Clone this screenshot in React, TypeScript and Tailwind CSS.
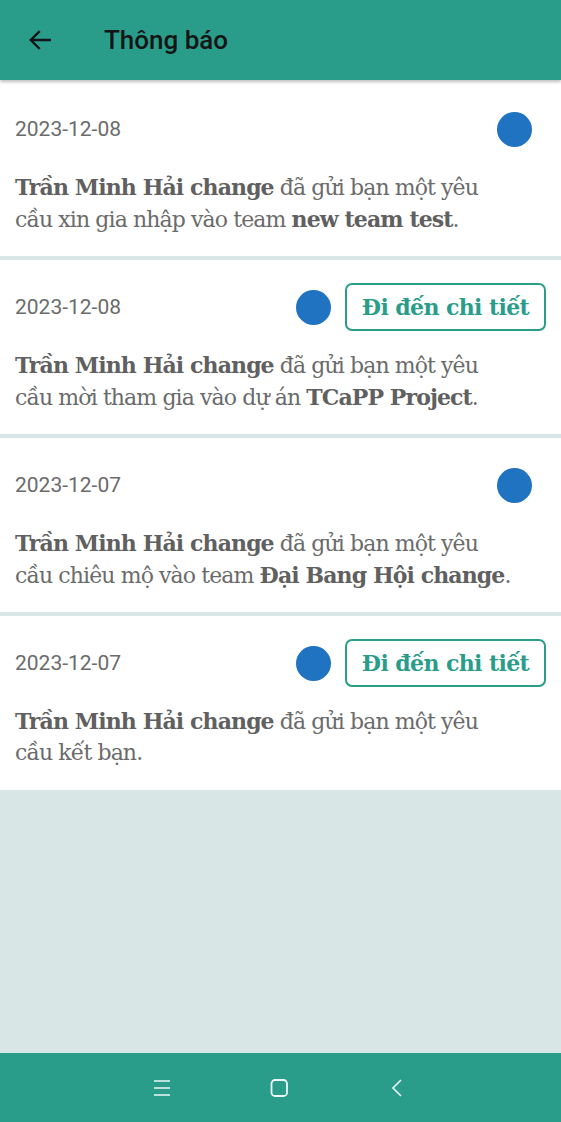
import React from "react";

// Mỗi thông báo có hai dòng nội dung, giữ đúng chỗ xuống dòng như ảnh gốc
type Part = { text: string; bold?: boolean };
type Notice = {
  date: string;
  lines: Part[][];
  hasButton: boolean;
};

const who: Part = { text: "Trần Minh Hải change", bold: true };

const notices: Notice[] = [
  {
    date: "2023-12-08",
    hasButton: false,
    lines: [
      [who, { text: " đã gửi bạn một yêu" }],
      [
        { text: "cầu xin gia nhập vào team " },
        { text: "new team test", bold: true },
        { text: "." },
      ],
    ],
  },
  {
    date: "2023-12-08",
    hasButton: true,
    lines: [
      [who, { text: " đã gửi bạn một yêu" }],
      [
        { text: "cầu mời tham gia vào dự án " },
        { text: "TCaPP Project", bold: true },
        { text: "." },
      ],
    ],
  },
  {
    date: "2023-12-07",
    hasButton: false,
    lines: [
      [who, { text: " đã gửi bạn một yêu" }],
      [
        { text: "cầu chiêu mộ vào team " },
        { text: "Đại Bang Hội change", bold: true },
        { text: "." },
      ],
    ],
  },
  {
    date: "2023-12-07",
    hasButton: true,
    lines: [[who, { text: " đã gửi bạn một yêu" }], [{ text: "cầu kết bạn." }]],
  },
];

const slab = { fontFamily: '"DejaVu Serif", "Liberation Serif", serif' };

const NoticeCard = ({ notice, first }: { notice: Notice; first?: boolean }) => (
  <div
    className={`bg-white pl-[15px] pr-[15px] pb-[21px] ${first ? "pt-[25px]" : "pt-[23px]"}`}
  >
    <div className="flex items-center h-[48px]">
      <span className="flex-1 text-[21px] leading-[24px] text-[#6b6b6b] font-['Roboto',sans-serif]">
        {notice.date}
      </span>
      <span className="w-[35px] h-[35px] rounded-full bg-[#1f73c1]" />
      {notice.hasButton ? (
        <button
          className="ml-[14px] w-[201px] h-[48px] border-2 border-[#2a9d8a] rounded-[7px] text-[#2a9d8a] font-bold text-[22px] leading-[28px] tracking-[-0.6px]"
          style={slab}
        >
          Đi đến chi tiết
        </button>
      ) : (
        <span className="w-[14px]" />
      )}
    </div>
    <div
      className="mt-[18px] text-[22px] leading-[32px] text-[#6b6b6b] tracking-[-0.9px]"
      style={slab}
    >
      {notice.lines.map((line, li) => (
        <p key={li} className="whitespace-nowrap h-[32px] overflow-visible">
          {line.map((p, i) =>
            p.bold ? (
              <b key={i} className="font-bold text-[#606060]">
                {p.text}
              </b>
            ) : (
              <span key={i}>{p.text}</span>
            )
          )}
        </p>
      ))}
    </div>
  </div>
);

export default function App() {
  return (
    <div className="w-[561px] h-[1122px] flex flex-col bg-[#d8e6e5] overflow-hidden">
      {/* Thanh tiêu đề */}
      <header className="relative z-10 h-[80px] shrink-0 bg-[#2a9d8a] flex items-center shadow-[0_2px_3px_rgba(0,0,0,0.25)]">
        <svg
          className="ml-[27px] w-[26px] h-[26px]"
          viewBox="0 0 24 24"
          fill="none"
          stroke="#141414"
          strokeWidth="2.2"
          strokeLinecap="square"
        >
          <path d="M21 12H4M11 4.5 3.5 12l7.5 7.5" />
        </svg>
        <h1 className="ml-[51px] text-[26px] font-medium text-[#151515] font-['Roboto',sans-serif]">
          Thông báo
        </h1>
      </header>

      {/* Danh sách thông báo */}
      <main className="flex-1 flex flex-col gap-[4px]">
        {notices.map((n, i) => (
          <NoticeCard key={i} notice={n} first={i === 0} />
        ))}
      </main>

      {/* Thanh điều hướng hệ thống */}
      <nav className="h-[69px] shrink-0 bg-[#2a9d8a] flex items-center justify-center gap-[77px] pr-[4px]">
        <svg className="w-[40px] h-[18px]" viewBox="0 0 40 18" fill="none" stroke="#eef8f6" strokeWidth="1.6">
          <path d="M12 2h16M12 9h16M12 16h16" />
        </svg>
        <svg className="w-[40px] h-[18px]" viewBox="0 0 40 18" fill="none" stroke="#eef8f6" strokeWidth="1.8">
          <rect x="12.5" y="1" width="15.5" height="16" rx="3.5" />
        </svg>
        <svg className="w-[40px] h-[18px]" viewBox="0 0 40 18" fill="none" stroke="#eef8f6" strokeWidth="1.6">
          <path d="M25 1 17 9l8 8" />
        </svg>
      </nav>
    </div>
  );
}
